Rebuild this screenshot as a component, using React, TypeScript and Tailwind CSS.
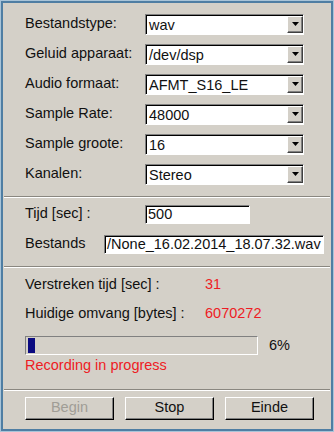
const combos = [
  { label: 'Bestandstype:', value: 'wav' },
  { label: 'Geluid apparaat:', value: '/dev/dsp' },
  { label: 'Audio formaat:', value: 'AFMT_S16_LE' },
  { label: 'Sample Rate:', value: '48000' },
  { label: 'Sample groote:', value: '16' },
  { label: 'Kanalen:', value: 'Stereo' },
];

function Separator({ className = '' }: { className?: string }) {
  return (
    <div className={`mx-[1px] border-t border-t-[#8a8780] border-b border-b-white ${className}`} />
  );
}

function ComboBox({ value }: { value: string }) {
  return (
    <div className="h-[21px] w-[159px] flex bg-white border border-t-[#808080] border-l-[#808080] border-b-white border-r-white shadow-[inset_1px_1px_0_#000]">
      <span className="flex-1 pl-[3px] pt-[1px] leading-[18px] truncate">{value}</span>
      <div className="mt-[1px] w-[16px] h-[17px] flex items-center justify-center bg-[#d4d0c8] border border-t-white border-l-white border-b-[#404040] border-r-[#404040] shadow-[inset_-1px_-1px_0_#808080]">
        <svg width="7" height="4" viewBox="0 0 7 4">
          <path d="M0 0h7L3.5 4z" fill="#000" />
        </svg>
      </div>
    </div>
  );
}

function TextInput({ value, className = '' }: { value: string; className?: string }) {
  return (
    <div
      className={`h-[19px] bg-white border border-t-[#808080] border-l-[#808080] border-b-white border-r-white shadow-[inset_1px_1px_0_#000] pl-[2px] leading-[17px] overflow-hidden whitespace-nowrap ${className}`}
    >
      {value}
    </div>
  );
}

function Button({ label, disabled }: { label: string; disabled?: boolean }) {
  return (
    <div
      className={`w-[89px] h-[23px] flex items-center justify-center bg-[#d4d0c8] border border-t-white border-l-white border-b-black border-r-black shadow-[inset_-1px_-1px_0_#808080] ${
        disabled ? 'text-[#a09d96]' : 'text-[#111]'
      }`}
    >
      {label}
    </div>
  );
}

export default function App() {
  return (
    <div className="w-[334px] h-[432px] bg-[#a9c4d8] p-px font-['Liberation_Sans',Arial,sans-serif] text-[14.5px] text-[#111]">
      <div className="h-full border-2 border-[#4f7ea3] bg-[#d4d0c8] flex flex-col">
        {/* Audio settings */}
        <div className="pl-[22px] pt-[6px]">
          {combos.map((c) => (
            <div key={c.label} className="h-[30px] grid grid-cols-[120px_159px] items-center">
              <span>{c.label}</span>
              <ComboBox value={c.value} />
            </div>
          ))}
        </div>

        <Separator className="mt-[7px]" />

        {/* Time / file */}
        <div className="pl-[22px] pt-[1px]">
          <div className="h-[30px] flex items-center">
            <span className="w-[120px]">Tijd [sec] :</span>
            <TextInput value="500" className="w-[105px]" />
          </div>
          <div className="h-[30px] flex items-center">
            <span className="w-[79px]">Bestands</span>
            <TextInput value="/None_16.02.2014_18.07.32.wav" className="w-[220px]" />
          </div>
        </div>

        <Separator className="mt-[7px]" />

        {/* Status */}
        <div className="pl-[22px] pt-[2px]">
          <div className="h-[29px] flex items-center">
            <span className="w-[180px]">Verstreken tijd [sec] :</span>
            <span className="text-[#ee1c24]">31</span>
          </div>
          <div className="h-[29px] flex items-center">
            <span className="w-[180px]">Huidige omvang [bytes] :</span>
            <span className="text-[#ee1c24]">6070272</span>
          </div>
          <div className="mt-[7px] flex items-center">
            <div className="w-[233px] h-[19px] border border-t-[#808080] border-l-[#808080] border-b-white border-r-white pl-[2px] pt-[1px]">
              <div className="w-[7px] h-[15px] bg-[#0a0a80]" />
            </div>
            <span className="ml-[11px]">6%</span>
          </div>
          <div className="leading-[17px] text-[#ee1c24]">Recording in progress</div>
        </div>

        <Separator className="mt-[15px]" />

        {/* Buttons */}
        <div className="pl-[22px] mt-[6px] flex gap-[11px]">
          <Button label="Begin" disabled />
          <Button label="Stop" />
          <Button label="Einde" />
        </div>
      </div>
    </div>
  );
}
